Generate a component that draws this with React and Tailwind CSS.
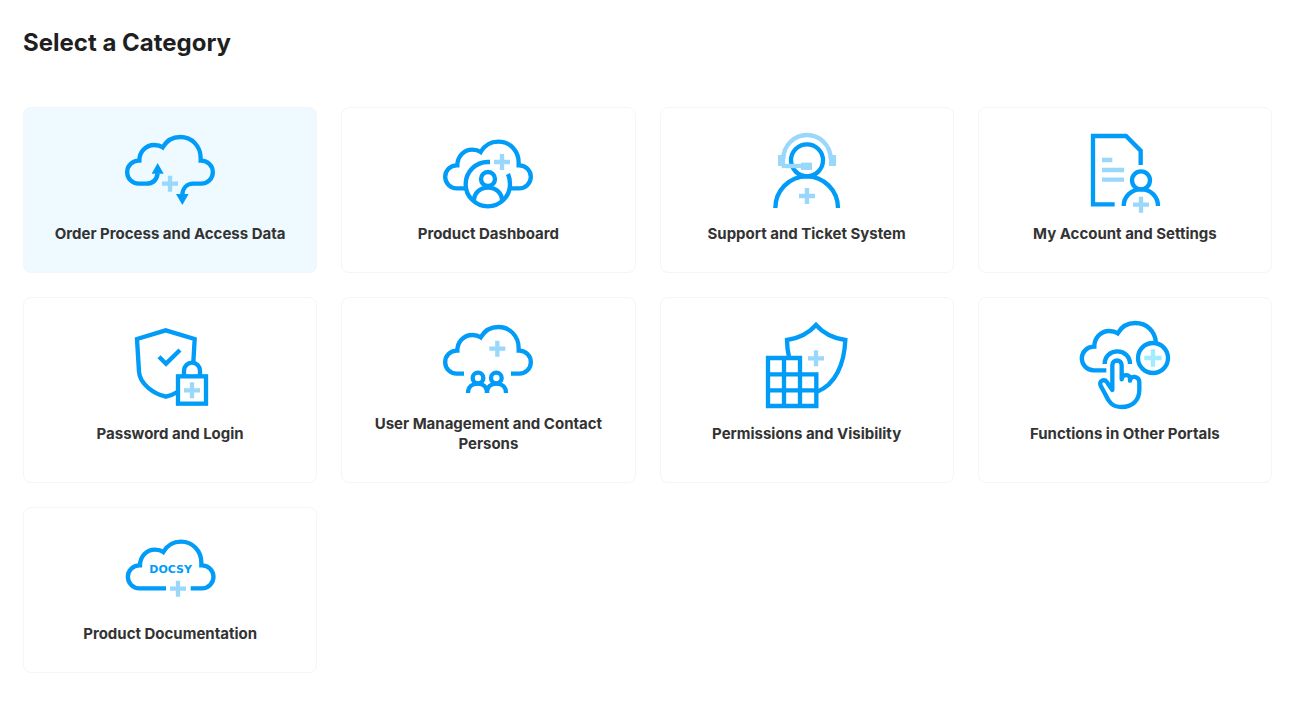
import { useState } from "react";

const cloudTop =
  "A34.5 34.5 0 0 1 86 122 H88 C88 96 107 75 133 75 C143 75 151 77 158 82 C169 63 188 51 211 51 C246 51 272 79 272 114 V122 H274";

function Icon({ children }) {
  return (
    <svg
      viewBox="0 0 360 300"
      aria-hidden="true"
      className="h-[100px] w-[120px] fill-none stroke-[#009cf8]"
      strokeWidth="13"
    >
      {children}
    </svg>
  );
}

function Plus({ x, y, arm = 24, color = "#99d8fb" }) {
  return (
    <path
      d={`M${x - arm} ${y}H${x + arm}M${x} ${y - arm}V${y + arm}`}
      stroke={color}
    />
  );
}

const OrderIcon = () => (
  <Icon>
    <path d={`M143 160 C140 180 129 191 108 191 H86 ${cloudTop} A34.5 34.5 0 0 1 274 191 H250 C231 191 218 204 217 224`} />
    <path d="M143 129 L161 161 H125 Z" fill="#009cf8" stroke="none" />
    <path d="M217 255 L198 222 H236 Z" fill="#009cf8" stroke="none" />
    <Plus x={180} y={191} />
  </Icon>
);

const DashboardIcon = () => (
  <Icon>
    <g transform="translate(0 14)">
      <path d={`M112 191 H86 ${cloudTop} A34.5 34.5 0 0 1 274 191 H248`} />
    </g>
    <path d="M186 126 H180 A66.5 66.5 0 1 0 246 192 C246 181 244 171 240 162" />
    <circle cx="180" cy="177" r="21" />
    <path d="M138 243 C138 218 157 203 180 203 S222 218 222 243" />
    <Plus x={222} y={126} />
  </Icon>
);

const SupportIcon = () => (
  <Icon>
    <circle cx="180" cy="121" r="48" />
    <path d="M85 264 A94 95 0 0 1 273 264" />
    <g stroke="#99d8fb">
      <path d="M109 118 V116 A71 71 0 0 1 251 116 V118" />
      <path d="M104 138 H166" />
    </g>
    <g fill="#99d8fb" stroke="none">
      <rect x="93" y="105" width="21" height="33" />
      <rect x="246" y="105" width="21" height="33" />
      <rect x="162" y="128" width="33" height="22" />
    </g>
    <Plus x={180} y={228} />
  </Icon>
);

const AccountIcon = () => (
  <Icon>
    <path d="M149 253 H84 V48 H183 L227 92 V135" />
    <path d="M111 120 H142 M111 150 H177 M111 179 H177" stroke="#99d8fb" />
    <circle cx="228" cy="181" r="27" />
    <path d="M176 258 C176 230 199 208 228 208 S279 230 279 258" />
    <Plus x={228} y={254} />
  </Icon>
);

const PasswordIcon = () => (
  <Icon>
    <g transform="translate(0 -15)">
      <path d="M250 142 L254 72 L167 46 L81 72 L87 170 C89 207 132 237 168 245 C181 242 191 238 202 231" />
      <path d="M147 125 L168 146 L210 105" />
      <rect x="204" y="184" width="84" height="82" />
      <path d="M222 182 V167 A24 24 0 0 1 270 167 V182" />
      <Plus x={246} y={226} />
    </g>
  </Icon>
);

const UsersIcon = () => (
  <Icon>
    <path d={`M108 191 H86 ${cloudTop} A34.5 34.5 0 0 1 274 191 H249`} />
    <circle cx="150" cy="204" r="16" />
    <circle cx="205" cy="204" r="16" />
    <path d="M120 249 C120 230 134 221 149 221 S177 230 177 249" />
    <path d="M177 249 C177 230 190 221 205 221 S234 230 234 249" />
    <Plus x={208} y={116} />
  </Icon>
);

const PermissionsIcon = () => (
  <Icon>
    <g transform="translate(0 -15)">
      <path d="M126 126 C122 110 120 93 120 75 C155 70 184 56 207 30 C230 56 259 70 295 75 C292 145 266 210 210 230" />
      <path d="M63 129 H159 V178 H208 V273 H63 Z M63 178 H159 M63 226 H208 M111 129 V273 M159 178 V273" />
      <Plus x={207} y={130} />
    </g>
  </Icon>
);

const PortalsIcon = () => (
  <Icon>
    <g transform="translate(0 -15)">
      <path d="M124 166 H86 A35.5 35.5 0 0 1 86 95 H88 C88 69 107 48 133 48 C143 48 151 50 158 55 C169 36 188 24 211 24 C246 24 270 49 273 83" />
      <circle cx="264" cy="129" r="45" />
      <path d="M119 147 C119 125 136 109 157 109 S195 125 195 147" />
      <path
        strokeLinejoin="round"
        d="M142 225 V150 C142 132 170 132 170 150 V193 C171 176 194 177 195 190 V197 C197 179 223 183 223 203 V225 C223 258 200 276 170 276 C140 276 130 258 122 240 L107 212 C100 198 118 189 127 203 Z"
      />
      <Plus x={264} y={129} arm={26} color="#a3ebff" />
    </g>
  </Icon>
);

const DocsIcon = () => (
  <Icon>
    <g transform="translate(2 14)">
      <path d={`M166 191 H86 ${cloudTop} A34.5 34.5 0 0 1 274 191 H240`} />
    </g>
    <text
      x="182"
      y="160"
      textAnchor="middle"
      fontSize="33"
      stroke="none"
      className="fill-[#009cf8] font-['DejaVu_Sans',sans-serif] font-bold"
    >
      DOCSY
    </text>
    <Plus x={204} y={206} />
  </Icon>
);

const categories = [
  { label: "Order Process and Access Data", Drawing: OrderIcon },
  { label: "Product Dashboard", Drawing: DashboardIcon },
  { label: "Support and Ticket System", Drawing: SupportIcon },
  { label: "My Account and Settings", Drawing: AccountIcon },
  { label: "Password and Login", Drawing: PasswordIcon },
  { label: "User Management and Contact Persons", Drawing: UsersIcon },
  { label: "Permissions and Visibility", Drawing: PermissionsIcon },
  { label: "Functions in Other Portals", Drawing: PortalsIcon },
  { label: "Product Documentation", Drawing: DocsIcon },
];

export default function App() {
  const [selected, setSelected] = useState(categories[0].label);

  return (
    <main className="bg-white pt-7 pr-[34px] pb-[38px] pl-[23px] font-[Inter,sans-serif]">
      <h1 className="text-2xl leading-[30px] font-bold text-[#1f1f1f]">Select a Category</h1>
      <div className="mt-[49px] grid grid-cols-4 gap-6">
        {categories.map(({ label, Drawing }) => (
          <button
            key={label}
            type="button"
            aria-pressed={selected === label}
            onClick={() => setSelected(label)}
            className="flex cursor-pointer flex-col items-center justify-center gap-1 rounded-lg border border-[#f5f5f5] bg-white px-6 pt-3 pb-7 aria-pressed:bg-[#eefaff]"
          >
            <Drawing />
            <span className="text-center text-[15px] leading-5 font-bold text-[#333]">{label}</span>
          </button>
        ))}
      </div>
    </main>
  );
}
